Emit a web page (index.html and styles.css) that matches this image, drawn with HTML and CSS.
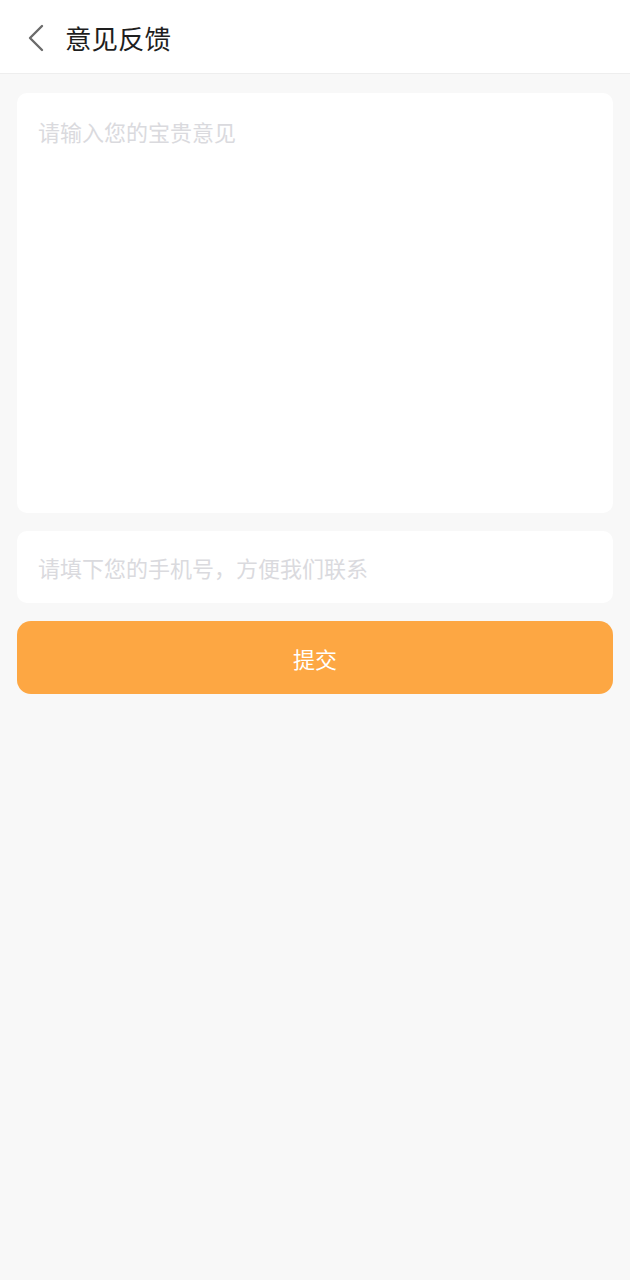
FILE: index.html
```html
<!DOCTYPE html>
<html lang="zh-CN">
<head>
<meta charset="utf-8">
<title>意见反馈</title>
<link rel="stylesheet" href="styles.css">
</head>
<body>
<header class="topbar">
  <span class="back">
    <svg width="18" height="28" viewBox="0 0 18 28"><path d="M15 2 L3 14 L15 26" fill="none" stroke="#6b6b6b" stroke-width="2.4" stroke-linecap="round" stroke-linejoin="round"/></svg>
  </span>
  <h1 class="title">意见反馈</h1>
</header>
<main class="content">
  <div class="card card-text"><span class="placeholder">请输入您的宝贵意见</span></div>
  <div class="card card-phone"><span class="placeholder">请填下您的手机号，方便我们联系</span></div>
  <button class="submit">提交</button>
</main>
</body>
</html>
```
FILE: styles.css
```css
* { box-sizing: border-box; }
html, body { margin: 0; padding: 0; }
body {
  background: #f8f8f8;
  font-family: "Noto Sans CJK SC", "Noto Sans", sans-serif;
  min-height: 1280px;
}
.topbar {
  height: 74px;
  background: #fff;
  border-bottom: 1px solid #eeeeee;
  display: flex;
  align-items: center;
  padding-left: 27px;
}
.back { display: flex; width: 18px; height: 28px; position: relative; top: 1px; }
.title {
  margin: 0 0 0 20px;
  font-size: 26.5px;
  font-weight: 400;
  color: #1e1e1e;
  line-height: 1;
  position: relative;
  top: 2px;
}
.content {
  padding: 19px 17px 0 17px;
  display: flex;
  flex-direction: column;
  gap: 18px;
}
.card {
  background: #fff;
  border-radius: 10px;
  padding: 0 21px;
}
.card-text { height: 420px; padding-top: 23px; }
.card-phone { height: 72px; display: flex; align-items: center; padding-top: 0; }
.placeholder {
  font-size: 22px;
  color: #dadade;
  line-height: 30px;
}
.submit {
  height: 73px;
  border: none;
  border-radius: 14px;
  background: #fda743;
  color: #fff;
  font-family: inherit;
  font-size: 22px;
  padding: 1px 0 0 0;
}
```
